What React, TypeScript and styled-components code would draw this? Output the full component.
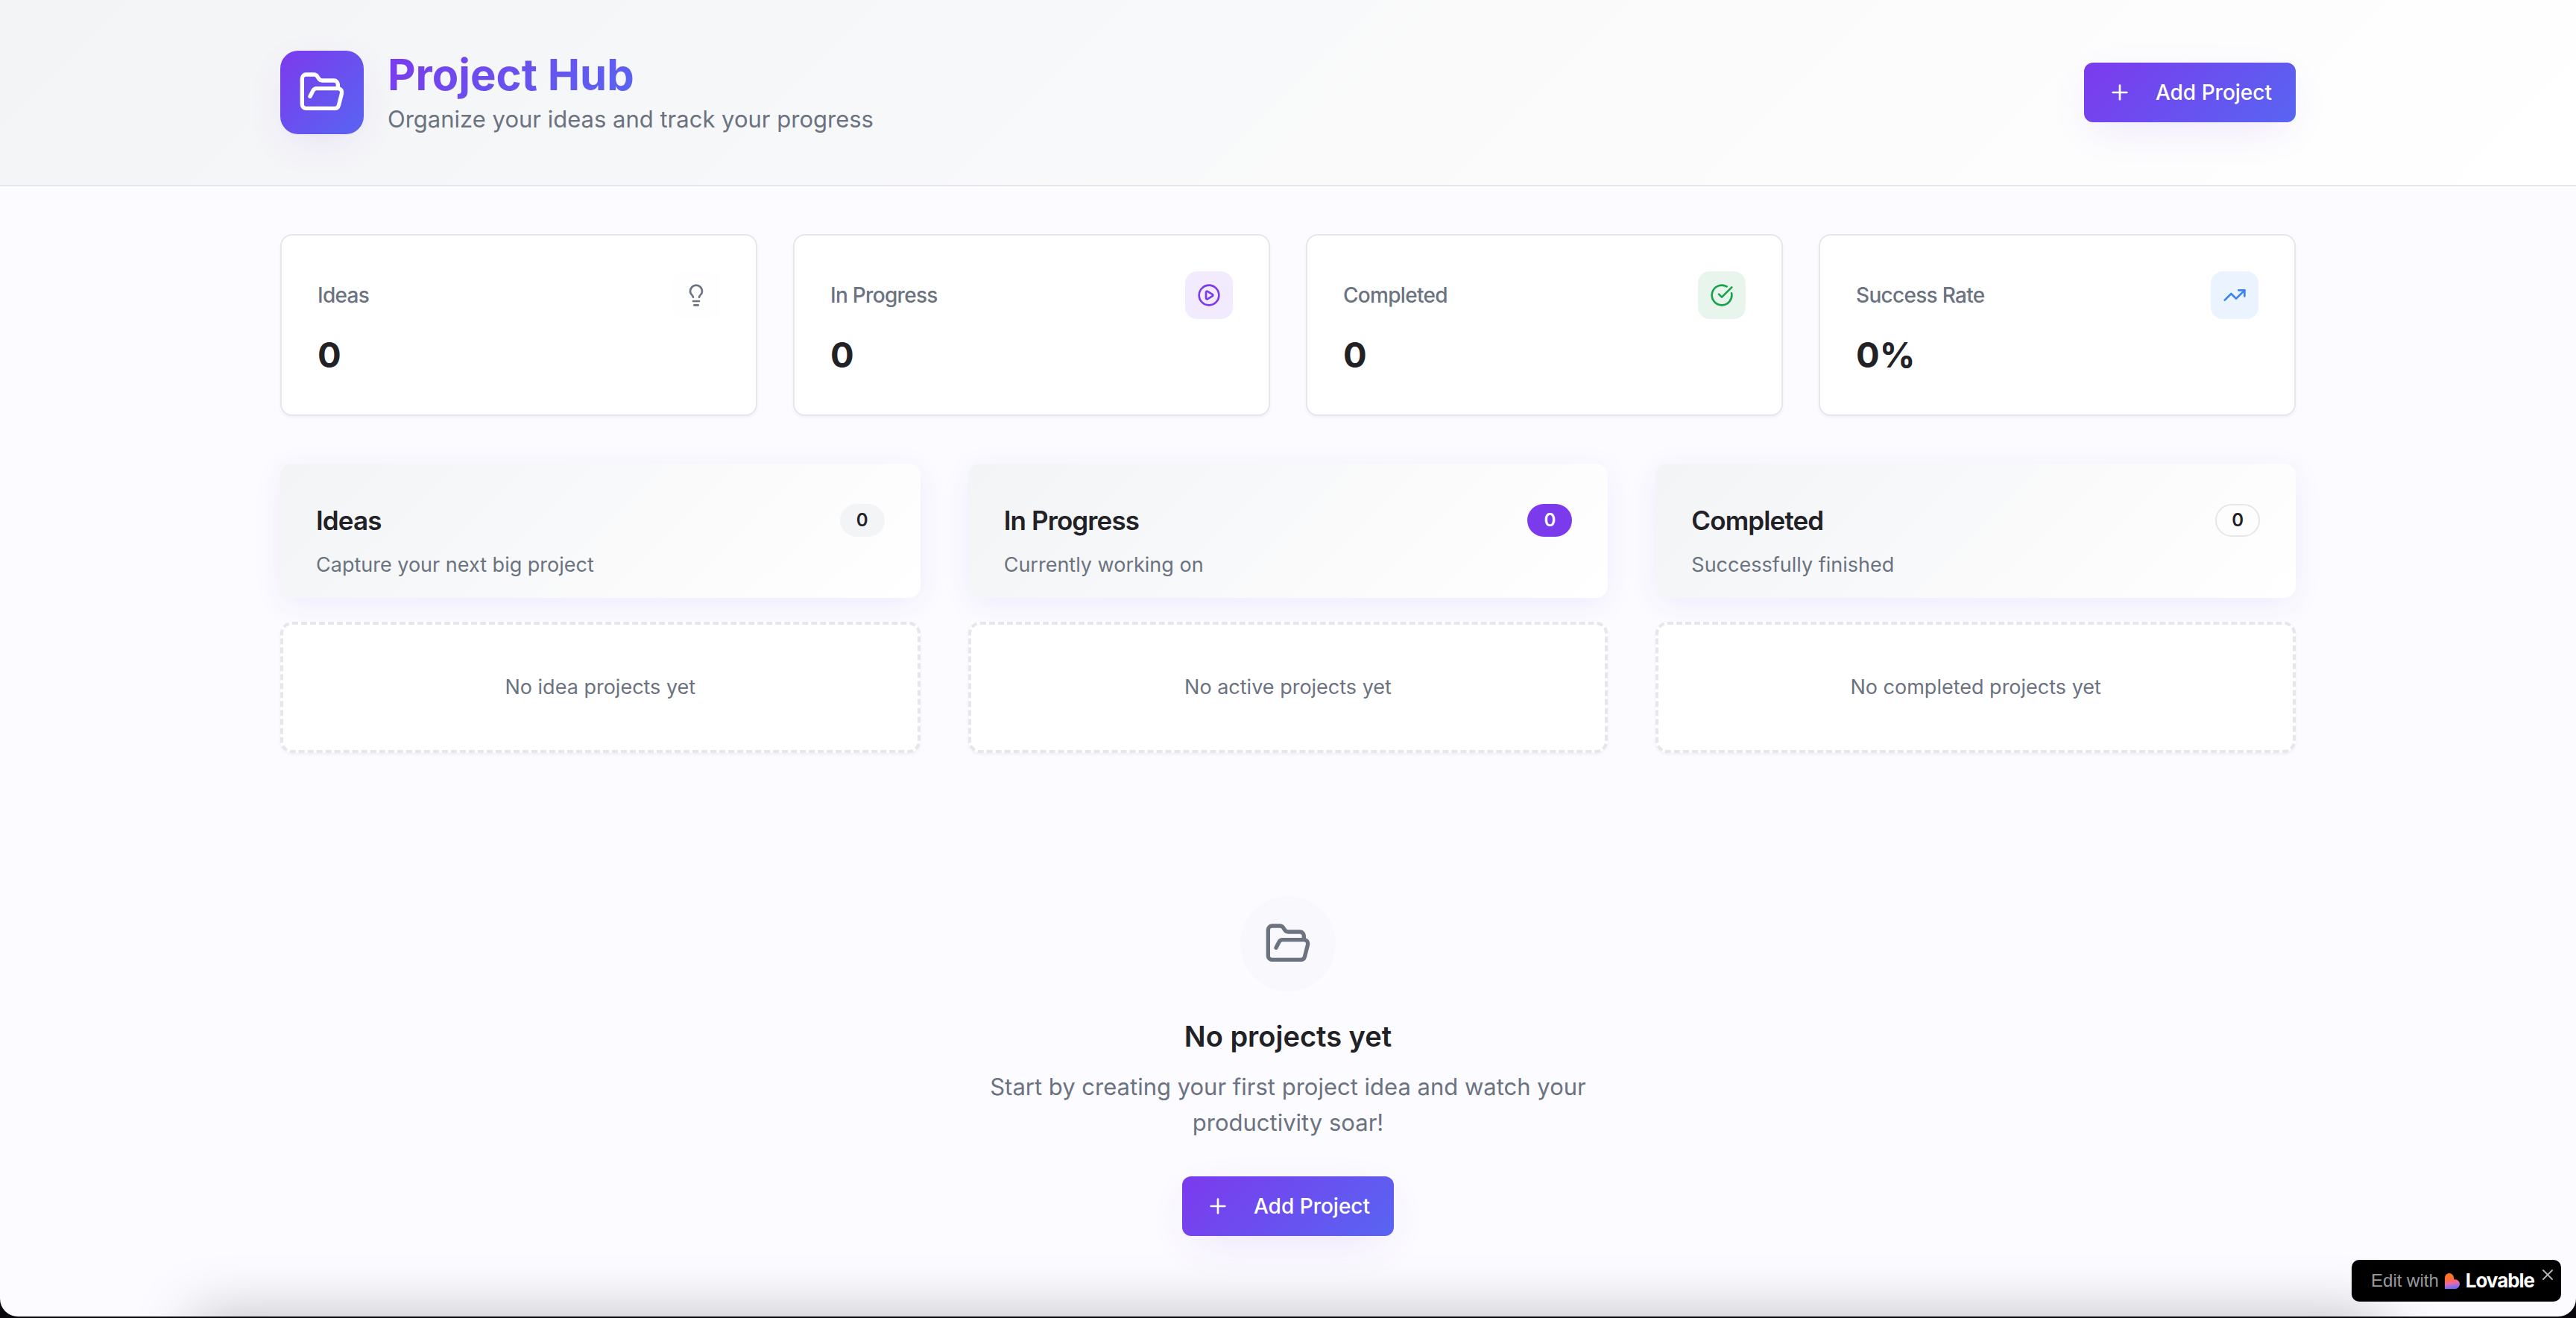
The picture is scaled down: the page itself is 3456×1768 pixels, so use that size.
import React from "react";
import styled, { createGlobalStyle, css } from "styled-components";
import {
  CircleCheckBig,
  CirclePlay,
  FolderOpen,
  Lightbulb,
  Plus,
  TrendingUp,
  X,
} from "lucide-react";

const GlobalStyle = createGlobalStyle`
  *, *::before, *::after { box-sizing: border-box; }
  body {
    margin: 0;
    background: #08080c;
    color: #212126;
    font-family: Inter, "Liberation Sans", sans-serif;
    font-size: 31px;
    line-height: 48px;
  }
  h1, h2, h3, p { margin: 0; }
  button { font: inherit; border: 0; cursor: pointer; }
  svg { display: block; flex-shrink: 0; }
`;

const violetGradient = "linear-gradient(135deg, #7c3aed, #5865f2)";
const subtleGradient = "linear-gradient(135deg, #f3f4f6, #ffffff)";
const glow = "0 16px 60px -16px rgba(124, 58, 237, 0.16)";

const Page = styled.div`
  position: relative;
  min-height: calc(100vh - 2px);
  background: #fcfbff;
  border-radius: 0 0 24px 24px;
  overflow: hidden;
`;

const Container = styled.div`
  max-width: 2800px;
  margin: 0 auto;
  padding: 64px 48px;
`;

const Header = styled.header`
  background: ${subtleGradient};
  border-bottom: 2px solid #e5e7eb;
`;

const HeaderRow = styled(Container)`
  display: flex;
  align-items: center;
  justify-content: space-between;
`;

const Brand = styled.div`
  display: flex;
  align-items: center;
  gap: 32px;
`;

const BrandMark = styled.div`
  padding: 24px;
  border-radius: 24px;
  color: #fff;
  background: ${violetGradient};
  box-shadow: ${glow};
`;

const Title = styled.h1`
  font-size: 58px;
  line-height: 72px;
  font-weight: 700;
  width: fit-content;
  color: transparent;
  background: ${violetGradient};
  background-clip: text;
`;

const Muted = styled.p<{ $small?: boolean }>`
  color: #6b7280;
  ${(p) =>
    p.$small &&
    css`
      font-size: 27px;
      line-height: 40px;
    `}
`;

const PrimaryButton = styled.button`
  display: inline-flex;
  align-items: center;
  gap: 32px;
  height: 80px;
  padding: 0 32px;
  border-radius: 12px;
  color: #fff;
  font-size: 28px;
  font-weight: 500;
  background: ${violetGradient};
  box-shadow: ${glow};
`;

const Main = styled(Container).attrs({ as: "main" })`
  display: flex;
  flex-direction: column;
  gap: 64px;
`;

const StatGrid = styled.section`
  display: grid;
  grid-template-columns: repeat(4, 1fr);
  gap: 48px;
`;

const StatCard = styled.article`
  display: flex;
  flex-direction: column;
  gap: 16px;
  padding: 48px;
  background: #fff;
  border: 2px solid #e5e7eb;
  border-radius: 16px;
  box-shadow: 0 2px 4px rgba(0, 0, 0, 0.05);
`;

const StatHead = styled.div`
  display: flex;
  align-items: center;
  justify-content: space-between;
`;

const StatLabel = styled.h3`
  color: #6b7280;
  font-size: 28px;
  line-height: 40px;
  font-weight: 500;
  letter-spacing: -0.025em;
`;

const StatIcon = styled.div<{ $color: string; $tint: string }>`
  padding: 16px;
  border-radius: 16px;
  color: ${(p) => p.$color};
  background: ${(p) => p.$tint};
`;

const StatValue = styled.p`
  font-size: 47px;
  line-height: 64px;
  font-weight: 700;
`;

const Board = styled.section`
  display: grid;
  grid-template-columns: repeat(3, 1fr);
  gap: 64px;
`;

const Column = styled.div`
  display: flex;
  flex-direction: column;
  gap: 32px;
`;

const ColumnHead = styled.div`
  display: flex;
  flex-direction: column;
  gap: 12px;
  padding: 48px 48px 24px;
  border-radius: 16px;
  background: ${subtleGradient};
  box-shadow: 0 8px 40px -4px rgba(99, 60, 237, 0.1);
`;

const ColumnTitleRow = styled.div`
  display: flex;
  align-items: center;
  justify-content: space-between;
`;

const ColumnTitle = styled.h2`
  font-size: 35px;
  line-height: 56px;
  font-weight: 600;
  letter-spacing: -0.025em;
`;

type BadgeKind = "secondary" | "primary" | "outline";

const badgeStyles = {
  secondary: css`
    background: #f3f4f6;
    border-color: transparent;
  `,
  primary: css`
    background: #7c3aed;
    border-color: transparent;
    color: #fff;
  `,
  outline: css`
    border-color: #e5e7eb;
  `,
};

const Badge = styled.span<{ $kind: BadgeKind }>`
  padding: 4px 20px;
  border: 2px solid;
  border-radius: 22px;
  font-size: 24px;
  line-height: 32px;
  font-weight: 600;
  ${(p) => badgeStyles[p.$kind]}
`;

const EmptyColumn = styled.div`
  position: relative;
  padding: 64px;
  text-align: center;
  background: #fff;
  border: 4px dashed #e5e7eb;
  border-radius: 16px;
  box-shadow: 0 2px 4px rgba(0, 0, 0, 0.05);
`;

const EmptyState = styled.section`
  display: flex;
  flex-direction: column;
  align-items: center;
  padding: 128px 0 0;
  text-align: center;
`;

const EmptyMark = styled.div`
  padding: 32px;
  border-radius: 50%;
  color: #6b7280;
  background: #f9f9fd;
`;

const EmptyTitle = styled.h3`
  margin: 32px 0 16px;
  font-size: 38px;
  line-height: 56px;
  font-weight: 600;
`;

const EmptyText = styled(Muted)`
  max-width: 840px;
  margin-bottom: 48px;
`;

const DockShade = styled.div`
  position: absolute;
  left: 260px;
  right: 260px;
  top: 100%;
  height: 200px;
  box-shadow: 0 0 80px rgba(0, 0, 0, 0.25);
  pointer-events: none;
`;

const EditBadge = styled.aside`
  position: absolute;
  right: 20px;
  bottom: 20px;
  display: flex;
  align-items: flex-start;
  height: 56px;
  padding-left: 26px;
  border-radius: 10px;
  background: #000;
`;

const EditLink = styled.a`
  display: flex;
  align-items: center;
  gap: 8px;
  height: 56px;
  color: #9a9a9a;
  font-family: "Liberation Sans", Arial, sans-serif;
  font-size: 24px;
  line-height: 28px;
  text-decoration: none;
`;

const Wordmark = styled.strong`
  color: #fff;
  font-family: Inter, "Liberation Sans", sans-serif;
  font-size: 26px;
  font-weight: 700;
  letter-spacing: -0.04em;
`;

const CloseButton = styled.button`
  margin: 8px 6px 0;
  padding: 0;
  color: #b4b4b4;
  background: none;
`;

const HeartLogo = () => (
  <svg width="20" height="21" viewBox="0 0 20 21" aria-hidden="true">
    <defs>
      <linearGradient id="heart" x1="0.35" y1="0" x2="0.5" y2="1">
        <stop offset="0" stopColor="#ff7a1a" />
        <stop offset="0.4" stopColor="#ff6a3c" />
        <stop offset="0.65" stopColor="#e868b0" />
        <stop offset="0.95" stopColor="#6a6cf8" />
      </linearGradient>
    </defs>
    <path
      fill="url(#heart)"
      d="M6 0a6 6 0 0 1 6 6v2.300h2a6 6 0 0 1 6 6.200A6.300 6.300 0 0 1 13.800 21H0V6a6 6 0 0 1 6-6Z"
    />
  </svg>
);

const AddProject = () => (
  <PrimaryButton type="button">
    <Plus size={32} />
    Add Project
  </PrimaryButton>
);

const stats = [
  { label: "Ideas", value: "0", Icon: Lightbulb, color: "#6b7280", tint: "#fefefe" },
  { label: "In Progress", value: "0", Icon: CirclePlay, color: "#7c3aed", tint: "#f2ebfd" },
  { label: "Completed", value: "0", Icon: CircleCheckBig, color: "#16a34a", tint: "#e8f5ed" },
  { label: "Success Rate", value: "0%", Icon: TrendingUp, color: "#3b82f6", tint: "#ebf3fe" },
];

const columns: { title: string; text: string; kind: BadgeKind; empty: string }[] = [
  { title: "Ideas", text: "Capture your next big project", kind: "secondary", empty: "No idea projects yet" },
  { title: "In Progress", text: "Currently working on", kind: "primary", empty: "No active projects yet" },
  { title: "Completed", text: "Successfully finished", kind: "outline", empty: "No completed projects yet" },
];

export default function App() {
  return (
    <>
      <GlobalStyle />
      <Page>
        <Header>
          <HeaderRow>
            <Brand>
              <BrandMark>
                <FolderOpen size={64} />
              </BrandMark>
              <div>
                <Title>Project Hub</Title>
                <Muted>Organize your ideas and track your progress</Muted>
              </div>
            </Brand>
            <AddProject />
          </HeaderRow>
        </Header>

        <Main>
          <StatGrid>
            {stats.map(({ label, value, Icon, color, tint }) => (
              <StatCard key={label}>
                <StatHead>
                  <StatLabel>{label}</StatLabel>
                  <StatIcon $color={color} $tint={tint}>
                    <Icon size={32} />
                  </StatIcon>
                </StatHead>
                <StatValue>{value}</StatValue>
              </StatCard>
            ))}
          </StatGrid>

          <Board>
            {columns.map(({ title, text, kind, empty }) => (
              <Column key={title}>
                <ColumnHead>
                  <ColumnTitleRow>
                    <ColumnTitle>{title}</ColumnTitle>
                    <Badge $kind={kind}>0</Badge>
                  </ColumnTitleRow>
                  <Muted $small>{text}</Muted>
                </ColumnHead>
                <EmptyColumn>
                  <Muted $small>{empty}</Muted>
                </EmptyColumn>
              </Column>
            ))}
          </Board>

          <EmptyState>
            <EmptyMark>
              <FolderOpen size={64} />
            </EmptyMark>
            <EmptyTitle>No projects yet</EmptyTitle>
            <EmptyText>
              Start by creating your first project idea and watch your productivity soar!
            </EmptyText>
            <AddProject />
          </EmptyState>
        </Main>

        <DockShade />
        <EditBadge>
          <EditLink href="#edit">
            Edit with
            <HeartLogo />
            <Wordmark>Lovable</Wordmark>
          </EditLink>
          <CloseButton type="button" aria-label="Close">
            <X size={24} />
          </CloseButton>
        </EditBadge>
      </Page>
    </>
  );
}
